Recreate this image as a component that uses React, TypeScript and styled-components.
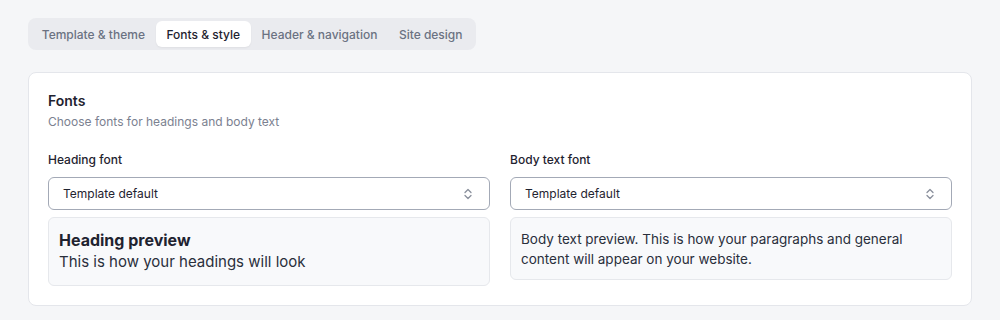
import React from "react";
import styled, { createGlobalStyle } from "styled-components";

const Global = createGlobalStyle`
  html, body { margin: 0; padding: 0; background: #f5f6f8; }
  body { font-family: Inter, "Noto Sans", sans-serif; color: #1f2330; -webkit-font-smoothing: antialiased; }
  * { box-sizing: border-box; }
`;

const Page = styled.div`
  padding: 18px 28px 14px 28px;
  display: flex;
  flex-direction: column;
  gap: 22px;
`;

const TabList = styled.div`
  display: flex;
  align-self: flex-start;
  background: #eaebef;
  border-radius: 8px;
  padding: 3px;
  height: 32px;
`;

const Tab = styled.div<{ $active?: boolean }>`
  display: flex;
  align-items: center;
  padding: 0 10.75px;
  font-size: 12px;
  font-weight: 500;
  border-radius: 6px;
  color: ${(p) => (p.$active ? "#1f2330" : "#6b7282")};
  background: ${(p) => (p.$active ? "#ffffff" : "transparent")};
  box-shadow: ${(p) => (p.$active ? "0 1px 2px rgba(0,0,0,0.05)" : "none")};
`;

const Card = styled.div`
  background: #ffffff;
  border: 1px solid #e4e6eb;
  border-radius: 8px;
  padding: 19px;
  height: 234px;
`;

const Title = styled.div`
  font-size: 14px;
  font-weight: 600;
  color: #1f2330;
  line-height: 18px;
`;

const Subtitle = styled.div`
  font-size: 12px;
  color: #7b8190;
  margin-top: 4px;
  line-height: 16px;
`;

const Grid = styled.div`
  display: grid;
  grid-template-columns: 1fr 1fr;
  column-gap: 20px;
  align-items: start;
  margin-top: 22px;
`;

const Field = styled.div`
  display: flex;
  flex-direction: column;
`;

const Label = styled.div`
  font-size: 12px;
  font-weight: 500;
  color: #1f2330;
  line-height: 16px;
`;

const Select = styled.div`
  margin-top: 9px;
  height: 33px;
  border: 1px solid #a3a9b6;
  border-radius: 6px;
  background: #fff;
  display: flex;
  align-items: center;
  justify-content: space-between;
  padding: 0 16px 0 14px;
  font-size: 12px;
  color: #1f2330;
`;

const Preview = styled.div<{ $tight?: boolean }>`
  margin-top: 7px;
  background: #f8f9fb;
  border: 1px solid #e6e8ec;
  border-radius: 6px;
  padding: 11px 10px ${(p) => (p.$tight ? "10px" : "12px")} 10px;
`;

const PreviewHeading = styled.div`
  font-size: 16px;
  font-weight: 700;
  color: #1f2330;
  line-height: 22px;
`;

const PreviewSub = styled.div`
  font-size: 15px;
  color: #2a2f3b;
  line-height: 22px;
`;

const PreviewBody = styled.div`
  font-size: 13.5px;
  color: #2a2f3b;
  line-height: 20px;
`;

const Chevrons = () => (
  <svg width="10" height="12" viewBox="0 0 10 12" fill="none" stroke="#8a909c" strokeWidth="1.3" strokeLinecap="round" strokeLinejoin="round">
    <path d="M2 4.5 L5 1.5 L8 4.5" />
    <path d="M2 7.5 L5 10.5 L8 7.5" />
  </svg>
);

export default function App() {
  return (
    <>
      <Global />
      <Page>
        <TabList>
          <Tab>Template &amp; theme</Tab>
          <Tab $active>Fonts &amp; style</Tab>
          <Tab>Header &amp; navigation</Tab>
          <Tab>Site design</Tab>
        </TabList>
        <Card>
          <Title>Fonts</Title>
          <Subtitle>Choose fonts for headings and body text</Subtitle>
          <Grid>
            <Field>
              <Label>Heading font</Label>
              <Select>
                <span>Template default</span>
                <Chevrons />
              </Select>
              <Preview>
                <PreviewHeading>Heading preview</PreviewHeading>
                <PreviewSub>This is how your headings will look</PreviewSub>
              </Preview>
            </Field>
            <Field>
              <Label>Body text font</Label>
              <Select>
                <span>Template default</span>
                <Chevrons />
              </Select>
              <Preview $tight>
                <PreviewBody>
                  Body text preview. This is how your paragraphs and general content will appear on your website.
                </PreviewBody>
              </Preview>
            </Field>
          </Grid>
        </Card>
      </Page>
    </>
  );
}
